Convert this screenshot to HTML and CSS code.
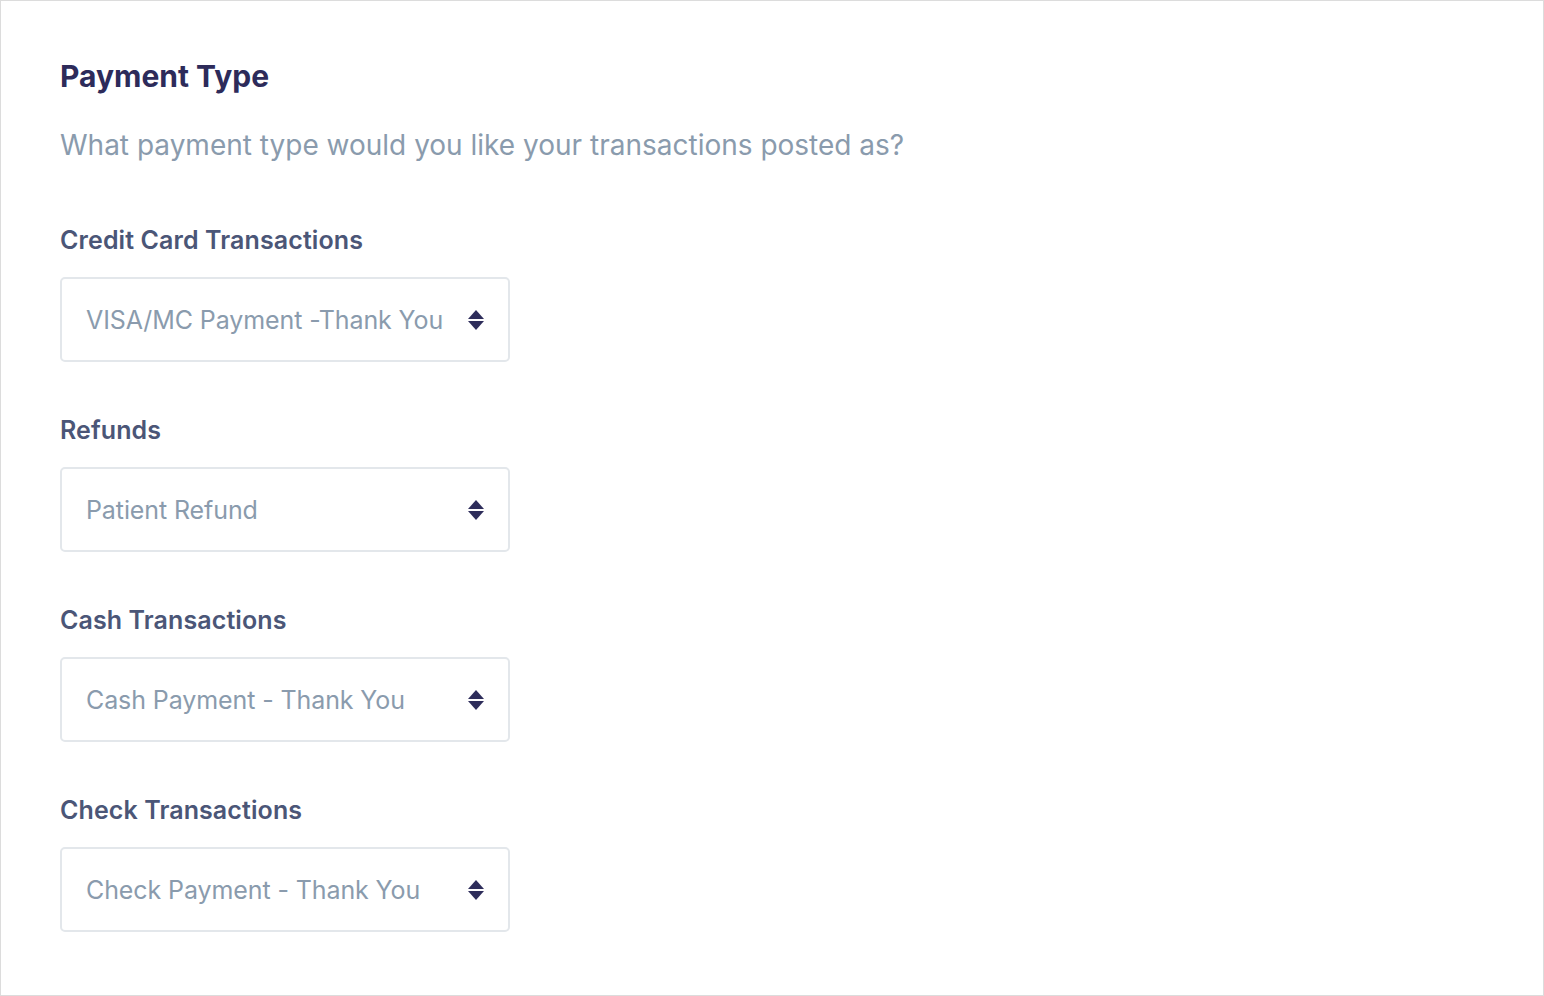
FILE: index.html
```html
<!DOCTYPE html>
<html>
<head>
<meta charset="utf-8">
<link rel="stylesheet" href="styles.css">
</head>
<body>
<div class="page">
  <h1 class="title">Payment Type</h1>
  <p class="subtitle">What payment type would you like your transactions posted as?</p>

  <div class="group">
    <div class="label">Credit Card Transactions</div>
    <div class="select"><span class="value">VISA/MC Payment -Thank You</span><span class="arrows"><span class="up"></span><span class="down"></span></span></div>
  </div>
  <div class="group">
    <div class="label">Refunds</div>
    <div class="select"><span class="value">Patient Refund</span><span class="arrows"><span class="up"></span><span class="down"></span></span></div>
  </div>
  <div class="group">
    <div class="label">Cash Transactions</div>
    <div class="select"><span class="value">Cash Payment - Thank You</span><span class="arrows"><span class="up"></span><span class="down"></span></span></div>
  </div>
  <div class="group">
    <div class="label">Check Transactions</div>
    <div class="select"><span class="value">Check Payment - Thank You</span><span class="arrows"><span class="up"></span><span class="down"></span></span></div>
  </div>
</div>
</body>
</html>
```
FILE: styles.css
```css
html, body { margin: 0; padding: 0; background: #fff; }
body { font-family: Inter, "Noto Sans", sans-serif; }
.page {
  box-sizing: border-box;
  width: 1544px;
  height: 996px;
  border: 1px solid #dcdcdc;
  padding: 58px 59px;
}
.title {
  margin: 0;
  font-size: 30px;
  line-height: 34px;
  font-weight: 700;
  color: #2d2b5a;
}
.subtitle {
  margin: 35px 0 0;
  font-size: 28px;
  line-height: 34px;
  font-weight: 400;
  color: #8a9bad;
}
.group { margin-top: 63px; }
.group + .group { margin-top: 53px; }
.label {
  font-size: 25px;
  line-height: 31px;
  font-weight: 600;
  letter-spacing: 0.1px;
  color: #4b5677;
}
.select {
  box-sizing: border-box;
  margin-top: 21px;
  width: 450px;
  height: 85px;
  border: 2px solid #e3e7eb;
  border-radius: 5px;
  display: flex;
  align-items: center;
  justify-content: space-between;
  padding: 0 24px 0 24px;
}
.value {
  font-size: 25px;
  letter-spacing: -0.1px;
  color: #8a9bad;
}
.arrows {
  display: flex;
  flex-direction: column;
  align-items: center;
  gap: 2px;
}
.up, .down {
  width: 0; height: 0;
  border-left: 8px solid transparent;
  border-right: 8px solid transparent;
}
.up { border-bottom: 9px solid #2e2d5b; }
.down { border-top: 9px solid #2e2d5b; }
```
